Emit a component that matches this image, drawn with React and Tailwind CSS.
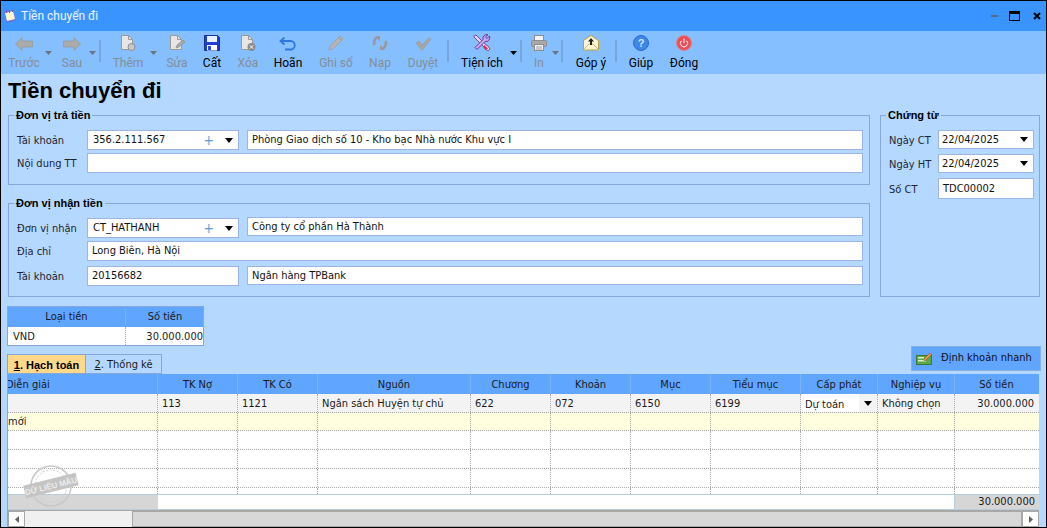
const font = "font-['DejaVu_Sans_Condensed','DejaVu_Sans',sans-serif]";
const uiFont = "font-['Roboto','Liberation_Sans',sans-serif]";
const boldFont = "font-['Liberation_Sans',sans-serif]";

const Icons = {
  back: (
    <svg width="18" height="14" viewBox="0 0 18 14"><path d="M.5 7 7 .5v3.500h10.500v6H7v3.500z" fill="#ababab" stroke="#979797" strokeWidth=".7" /></svg>
  ),
  next: (
    <svg width="18" height="14" viewBox="0 0 18 14"><path d="M17.500 7 11 .5v3.500H.5v6H11v3.500z" fill="#ababab" stroke="#979797" strokeWidth=".7" /></svg>
  ),
  add: (
    <svg width="16" height="16" viewBox="0 0 16 16"><path d="M1.500.5h7l4 4v10h-11z" fill="#e6e6e6" stroke="#9a9a9a" /><path d="M8.500.5v4h4" fill="none" stroke="#9a9a9a" /><circle cx="11.500" cy="12" r="3.500" fill="#c8c8c8" stroke="#8e8e8e" /></svg>
  ),
  edit: (
    <svg width="16" height="16" viewBox="0 0 16 16"><path d="M1.500.5h7l4 4v10h-11z" fill="#e6e6e6" stroke="#9a9a9a" /><path d="M8.500.5v4h4" fill="none" stroke="#9a9a9a" /><path d="m7 13 1-3 6-5 2 2-6 5z" fill="#aaa" stroke="#8e8e8e" strokeWidth=".7" /></svg>
  ),
  save: (
    <svg width="16" height="16" viewBox="0 0 16 16"><path d="M.5.5h13l2 2v13H.5z" fill="#1f3fd0" stroke="#16309f" /><rect x="3" y="1" width="10" height="6" fill="#e9f0ff" /><rect x="3" y="10" width="10" height="5.500" fill="#fff" /><rect x="4" y="11" width="3" height="4" fill="#2b4ad6" /></svg>
  ),
  del: (
    <svg width="16" height="16" viewBox="0 0 16 16"><path d="M1.500.5h7l4 4v10h-11z" fill="#e6e6e6" stroke="#9a9a9a" /><path d="M8.500.5v4h4" fill="none" stroke="#9a9a9a" /><circle cx="11.500" cy="12" r="4" fill="#8a8a8a" /><path d="m9.800 10.300 3.400 3.400m0-3.400-3.400 3.400" stroke="#fff" strokeWidth="1" /></svg>
  ),
  undo: (
    <svg width="18" height="14" viewBox="0 0 18 14"><path d="M2 4h9.500a4 4 0 0 1 0 8.500H6" fill="none" stroke="#2b78e0" strokeWidth="1.800" /><path d="M5.500.5 1.500 4l4 3.500" fill="none" stroke="#2b78e0" strokeWidth="1.800" /></svg>
  ),
  pen: (
    <svg width="16" height="16" viewBox="0 0 16 16"><path d="M1 15l1-4L12 1l3 3L5 14z" fill="#b5b5b5" stroke="#9a9a9a" strokeWidth=".7" /><path d="m10.500 2.500 3 3" stroke="#8e8e8e" /></svg>
  ),
  reload: (
    <svg width="16" height="16" viewBox="0 0 16 16"><path d="M2.500 10A6 6 0 0 1 5 2.600M13.500 6A6 6 0 0 1 11 13.400" fill="none" stroke="#999" strokeWidth="2.800" /><path d="M3 1h5v5zM13 15H8v-5z" fill="#999" /></svg>
  ),
  check: (
    <svg width="17" height="14" viewBox="0 0 17 14"><path d="M1 6l3-2 3 4 7-7.500 2 2-9 11z" fill="#a4a4a4" stroke="#989898" strokeWidth=".5" /></svg>
  ),
  tools: (
    <svg width="18" height="17" viewBox="0 0 18 17"><path d="M1 2l2-1 9 9 3 2 2 3-2 2-3-2-2-3-9-9z" fill="#e7d9f3" stroke="#6c3ea8" strokeWidth=".9" /><path d="M16.500 2 14 4.500 12.500 3 15 .7A4 4 0 0 0 10 5.500L2 13.500 4 15.500l8-8A4 4 0 0 0 16.500 2z" fill="#c8a8ea" stroke="#5d2f9e" strokeWidth=".9" /><path d="m11.500 11 3.500 3.500-1.500 1.500L10 12.500z" fill="#d9304a" /></svg>
  ),
  print: (
    <svg width="16" height="16" viewBox="0 0 16 16"><rect x="3.500" y=".5" width="9" height="5" fill="#f2f2f2" stroke="#8e8e8e" /><rect x=".5" y="5.500" width="15" height="6" rx="1" fill="#a8a8a8" stroke="#8e8e8e" /><rect x="3.500" y="9.500" width="9" height="6" fill="#f2f2f2" stroke="#8e8e8e" /><path d="M5 12h6M5 14h6" stroke="#a0a0a0" /></svg>
  ),
  mail: (
    <svg width="16" height="16" viewBox="0 0 16 16"><path d="M.5 5.500 8 .5l7.500 5v9.500H.5z" fill="#fff6d8" stroke="#c69a3a" /><path d="M.5 14.500 6 9h4l5.500 5.500" fill="none" stroke="#d9b968" /><path d="M8 3 5 6.500h2V10h2V6.500h2z" fill="#222" /></svg>
  ),
  help: (
    <svg width="16" height="16" viewBox="0 0 16 16"><circle cx="8" cy="8" r="7.500" fill="#3d86ea" stroke="#2a6cc8" /><text x="8" y="12" textAnchor="middle" fontSize="11" fontWeight="700" fill="#cfe4ff" fontFamily="Liberation Sans">?</text></svg>
  ),
  power: (
    <svg width="16" height="16" viewBox="0 0 16 16"><circle cx="8" cy="8" r="7.500" fill="#ec4d57" stroke="#d7868c" /><path d="M5.400 5.800a3.600 3.600 0 1 0 5.200 0" fill="none" stroke="#fff" strokeWidth="1" /><path d="M8 3.500v4.500" stroke="#fff" strokeWidth="1" /></svg>
  ),
};

function Caret({ cls, dis }) {
  return (
    <div className={`mt-[17px] flex h-[9px] items-center justify-center self-start ${cls}`}>
      <svg width="7" height="4" viewBox="0 0 7 4"><path d="M0 0h7L3.500 4z" fill={dis ? "#6b7280" : "#000"} /></svg>
    </div>
  );
}

function Sep({ cls }) {
  return <div className={`mt-[9px] h-[22px] w-[2px] bg-[#78a6dc] ${cls}`} />;
}

function Tool({ cls, icon, label, dis }) {
  return (
    <div className={`flex h-[43px] flex-col items-center ${cls}`}>
      <div className="flex h-[22px] items-end justify-center pb-[2px]">{Icons[icon]}</div>
      <div className={`mt-[2px] whitespace-nowrap text-[12px] leading-[16px] ${uiFont} ${dis ? "text-[#858d96]" : "text-black"}`}>{label}</div>
    </div>
  );
}

function Field({ cls, value, combo, date, h = "h-[20px]" }) {
  return (
    <div className={`flex items-center border border-[#9db4e8] bg-white text-[11px] leading-[16px] text-[#111] ${h} ${cls}`}>
      <span className={combo ? "pl-[5px]" : date ? "pl-[3px]" : "pl-[4px]"}>{value}</span>
      {combo && <span className="ml-auto mr-[11px] text-[14px] leading-none text-[#5d9be0]">+</span>}
      {(combo || date) && (
        <svg className={combo ? "mr-[5px]" : "ml-auto mr-[5px]"} width="8" height="5" viewBox="0 0 8 5"><path d="M0 0h8L4 5z" fill="#000" /></svg>
      )}
    </div>
  );
}

function Label({ children, cls }) {
  return <div className={`mt-[2px] text-[11px] leading-[16px] text-[#1c2430] ${cls}`}>{children}</div>;
}

function Group({ cls, title, children }) {
  return (
    <fieldset className={`border border-[#86a6dc] ${cls}`}>
      <legend className={`ml-[5px] px-[2px] text-[11px] font-bold leading-[14px] text-black ${boldFont}`}>{title}</legend>
      {children}
    </fieldset>
  );
}

const gridCols = "grid grid-cols-[150px_80px_80px_153px_80px_80px_80px_90px_77px_77px_83px]";
const headers = ["Diễn giải", "TK Nợ", "TK Có", "Nguồn", "Chương", "Khoản", "Mục", "Tiểu mục", "Cấp phát", "Nghiệp vụ", "Số tiền"];

function Row({ bg, h, leading = "leading-[18px]", values }) {
  return (
    <div className={`${gridCols} ${bg} ${h} border-b border-dotted border-[#a8a8a8]`}>
      {Array.from({ length: 11 }).map((_, i) => (
        <div key={i} className={`overflow-hidden whitespace-nowrap px-[4px] text-[11px] text-[#1a1a1a] ${leading} ${i < 10 ? "border-r border-dotted border-[#a8a8a8]" : ""}`}>
          {values ? values[i] : ""}
        </div>
      ))}
    </div>
  );
}

export default function App() {
  return (
    <div className={`flex h-[528px] w-[1047px] flex-col overflow-hidden border border-black bg-[#b4d8ff] ${font}`}>
      {/* title bar */}
      <div className="flex h-[30px] shrink-0 items-center bg-[#3a94ff]">
        <svg className="ml-[2px]" width="14" height="15" viewBox="0 0 14 15">
          <path d="M1 3 10 1l3 10-9 3z" fill="#7d6bd0" />
          <path d="M2 4l8-2 2 8-8 2z" fill="#fff8d0" />
          <path d="M3 1h1v3H3zM6 1h1v3H6zM9 1h1v2H9z" fill="#6b5cc0" />
        </svg>
        <span className={`ml-[4px] text-[12px] text-[#eaf4ff] ${uiFont}`}>Tiền chuyển đi</span>
        <div className="ml-auto flex items-center">
          <div className="h-[2px] w-[7px] bg-[#5b6b80]" />
          <div className="ml-[11px] h-[10px] w-[11px] border border-t-[3px] border-black" />
          <svg className="ml-[13px] mr-[5px]" width="8" height="8" viewBox="0 0 8 8"><path d="M1 1l6 6M7 1 1 7" stroke="#000" strokeWidth="2" /></svg>
        </div>
      </div>

      {/* toolbar */}
      <div className="flex h-[43px] shrink-0 bg-[#85bfff] pl-[3px]">
        <Tool cls="w-[40px]" icon="back" label="Trước" dis />
        <Caret cls="w-[8px]" dis />
        <Tool cls="ml-[4px] w-[32px]" icon="next" label="Sau" dis />
        <Caret cls="w-[8px]" dis />
        <Sep cls="ml-[3px]" />
        <Tool cls="ml-[7px] w-[40px]" icon="add" label="Thêm" dis />
        <Caret cls="ml-[1px] w-[8px]" dis />
        <Tool cls="ml-[4px] w-[32px]" icon="edit" label="Sửa" dis />
        <Tool cls="ml-[3px] w-[32px]" icon="save" label="Cất" />
        <Tool cls="ml-[4px] w-[32px]" icon="del" label="Xóa" dis />
        <Tool cls="ml-[6px] w-[36px]" icon="undo" label="Hoãn" />
        <Tool cls="ml-[8px] w-[44px]" icon="pen" label="Ghi sổ" dis />
        <Tool cls="ml-[6px] w-[32px]" icon="reload" label="Nạp" dis />
        <Tool cls="ml-[7px] w-[40px]" icon="check" label="Duyệt" dis />
        <Sep cls="ml-[4px]" />
        <Tool cls="ml-[8px] w-[50px]" icon="tools" label="Tiện ích" />
        <Caret cls="ml-[2px] w-[8px]" />
        <Sep cls="ml-[3px]" />
        <Tool cls="ml-[5px] w-[24px]" icon="print" label="In" dis />
        <Caret cls="w-[8px]" dis />
        <Sep cls="ml-[2px]" />
        <Tool cls="ml-[8px] w-[40px]" icon="mail" label="Góp ý" />
        <Sep cls="ml-[4px]" />
        <Tool cls="ml-[6px] w-[36px]" icon="help" label="Giúp" />
        <Tool cls="ml-[5px] w-[40px]" icon="power" label="Đóng" />
      </div>

      {/* body */}
      <div className="relative flex min-h-0 flex-1 flex-col pl-[7px]">
        <h1 className={`h-[34px] pt-[3px] text-[22px] font-bold leading-[28px] text-black ${boldFont}`}>Tiền chuyển đi</h1>

        <div className="flex">
          <div className="flex w-[862px] flex-col gap-[11px]">
            <Group cls="h-[77px]" title="Đơn vị trả tiền">
              <div className="flex flex-col gap-[3px] pt-[8px]">
                <div className="flex items-center">
                  <Label cls="w-[78px] pl-[8px]">Tài khoản</Label>
                  <Field cls="w-[152px]" value="356.2.111.567" combo />
                  <Field cls="ml-[8px] w-[616px]" value="Phòng Giao dịch số 10 - Kho bạc Nhà nước Khu vực I" />
                </div>
                <div className="flex items-center">
                  <Label cls="w-[78px] pl-[8px]">Nội dung TT</Label>
                  <Field cls="w-[776px]" value="" />
                </div>
              </div>
            </Group>
            <Group cls="h-[101px]" title="Đơn vị nhận tiền">
              <div className="flex flex-col pt-[8px]">
                <div className="flex items-center">
                  <Label cls="w-[78px] pl-[8px]">Đơn vị nhận</Label>
                  <Field cls="w-[152px]" value="CT_HATHANH" combo />
                  <Field cls="-mt-[1px] ml-[8px] w-[616px] self-start" h="h-[19px]" value="Công ty cổ phần Hà Thành" />
                </div>
                <div className="mt-[3px] flex items-center">
                  <Label cls="w-[78px] pl-[8px]">Địa chỉ</Label>
                  <Field cls="w-[776px]" value="Long Biên, Hà Nội" />
                </div>
                <div className="mt-[5px] flex items-center">
                  <Label cls="w-[78px] pl-[8px]">Tài khoản</Label>
                  <Field cls="w-[152px]" value="20156682" />
                  <Field cls="ml-[8px] w-[616px] self-start" h="h-[19px]" value="Ngân hàng TPBank" />
                </div>
              </div>
            </Group>
          </div>

          <Group cls="ml-[10px] h-[189px] w-[160px]" title="Chứng từ">
            <div className="flex flex-col gap-[5px] pt-[8px]">
              <div className="flex items-center">
                <Label cls="w-[57px] pl-[8px]">Ngày CT</Label>
                <Field cls="w-[96px]" h="h-[19px]" value="22/04/2025" date />
              </div>
              <div className="flex items-center">
                <Label cls="w-[57px] pl-[8px]">Ngày HT</Label>
                <Field cls="w-[96px]" h="h-[19px]" value="22/04/2025" date />
              </div>
              <div className="flex items-center">
                <Label cls="w-[57px] pl-[8px]">Số CT</Label>
                <Field cls="w-[96px]" h="h-[21px]" value="TDC00002" />
              </div>
            </div>
          </Group>
        </div>

        {/* currency table */}
        <div className="-ml-[1px] mt-[9px] w-[197px] border border-[#86a6dc] bg-white text-[11px] leading-[16px] text-[#1a1a1a]">
          <div className="grid h-[20px] grid-cols-[118px_78px] items-center bg-[#60a5ff] text-center">
            <div className="border-r border-[#7cb0f0]">Loại tiền</div>
            <div>Số tiền</div>
          </div>
          <div className="grid h-[18px] grid-cols-[118px_78px]">
            <div className="flex h-full items-center border-r border-dotted border-[#a8a8a8] pl-[5px] pt-[1px]">VND</div>
            <div className="flex items-center justify-end pr-[1px] pt-[1px]">30.000.000</div>
          </div>
        </div>

        {/* tabs + quick button */}
        <div className="flex h-[28px] items-start justify-between pr-[5px]">
          <div className="-ml-[1px] mt-[8px] flex h-[20px] text-[11px] leading-[20px]">
            <div className={`w-[79px] border border-[#86a6dc] bg-[#ffd88a] text-center font-bold text-black ${boldFont}`}>
              <span className="underline">1</span>. Hạch toán
            </div>
            <div className="w-[76px] border border-l-0 border-[#86a6dc] bg-[#b4d8ff] text-center text-[#1a1a1a]">
              <span className="underline">2</span>. Thống kê
            </div>
          </div>
          <div className="flex h-[25px] w-[130px] items-center border border-[#86b0e0] bg-[#60a5ff] pl-[4px] text-[11px] text-[#111]">
            <svg width="16" height="13" viewBox="0 0 16 13">
              <rect x=".5" y="3.500" width="15" height="9" fill="#5aa84a" stroke="#3b7a33" />
              <rect x="2" y="5" width="6" height="1.500" fill="#d7f0c8" />
              <rect x="2" y="8" width="8" height="1.500" fill="#d7f0c8" />
              <path d="M8 7 14 1l1.500 1.500-6 6H8z" fill="#e8a04a" stroke="#b0402a" strokeWidth=".6" />
            </svg>
            <span className="ml-[9px]">Định khoản nhanh</span>
          </div>
        </div>

        {/* grid */}
        <div className="relative -ml-[1px] flex w-[1032px] flex-1 flex-col overflow-hidden border-l border-[#86a6dc]">
          <div className={`${gridCols} h-[20px] shrink-0 bg-[#60a5ff] text-[11px] leading-[21px] text-[#1a1a1a]`}>
            {headers.map((h, i) => (
              <div key={i} className={`overflow-hidden whitespace-nowrap text-center ${i < 10 ? "border-r border-[#7cb0f0]" : ""} ${i === 0 ? "-indent-[2px] text-left" : ""}`}>
                {h}
              </div>
            ))}
          </div>
          <Row
            bg="bg-[#f3f3f3]"
            h="h-[19px]"
            leading="leading-[19px]"
            values={[
              "",
              "113",
              "1121",
              "Ngân sách Huyện tự chủ",
              "622",
              "072",
              "6150",
              "6199",
              <div key="c" className="-mx-[4px] flex h-full items-center bg-white pl-[4px] pt-[2px]">
                <span>Dự toán</span>
                <span className="-mt-[2px] ml-auto flex h-[18px] w-[18px] items-center justify-center bg-[#f3f3f3]">
                  <svg width="8" height="5" viewBox="0 0 8 5"><path d="M0 0h8L4 5z" fill="#000" /></svg>
                </span>
              </div>,
              "Không chọn",
              <div key="t" className="text-right">30.000.000</div>,
            ]}
          />
          <Row bg="bg-[#ffffe0]" h="h-[18px]" values={[<span key="m" className="-ml-[4px]">mới</span>]} />
          <Row bg="bg-white" h="h-[19px]" />
          <Row bg="bg-white" h="h-[19px]" />
          <Row bg="bg-white" h="h-[19px]" />
          <div className={`${gridCols} h-[6px] bg-white`}>
            {Array.from({ length: 11 }).map((_, i) => (
              <div key={i} className={i < 10 ? "border-r border-dotted border-[#a8a8a8]" : ""} />
            ))}
          </div>
          <div className="flex h-[16px] shrink-0 border-y border-[#b8ccdc] bg-white text-[11px] leading-[14px] text-[#1a1a1a]">
            <div className="w-[150px] bg-[#d6d6d6]" />
            <div className="w-[797px] border-r border-[#b8ccdc]" />
            <div className="flex-1 bg-[#d6d6d6] pr-[4px] text-right">30.000.000</div>
          </div>
          <div className="flex h-[17px] shrink-0 border-t border-[#a8a8a8] bg-[#f0f0f0]">
            <div className="flex w-[17px] items-center justify-center border border-[#a8a8a8] bg-white">
              <svg width="4" height="7" viewBox="0 0 4 7"><path d="M4 0v7L0 3.500z" fill="#606060" /></svg>
            </div>
            <div className="w-[107px]" />
            <div className="flex-1 border border-[#a8a8a8] bg-[#d8d8d8]" />
            <div className="flex w-[17px] items-center justify-center border border-[#a8a8a8] bg-white">
              <svg width="4" height="7" viewBox="0 0 4 7"><path d="M0 0v7l4-3.500z" fill="#606060" /></svg>
            </div>
          </div>
          {/* watermark stamp */}
          <svg className="pointer-events-none absolute left-[15px] top-[88px]" width="58" height="48" viewBox="0 0 58 48">
            <circle cx="28" cy="24" r="20" fill="none" stroke="#c8c8c8" strokeWidth="1.500" />
            <circle cx="28" cy="24" r="16" fill="none" stroke="#d0d0d0" strokeWidth="1" strokeDasharray="2 1.500" />
            <g transform="rotate(-14 28 24)">
              <rect x="1" y="17" width="54" height="13" fill="#c4c4c4" />
              <text x="28" y="27" textAnchor="middle" fontSize="8" fontWeight="700" fill="#ececec" fontFamily="Liberation Sans">DỮ LIỆU MẪU</text>
            </g>
          </svg>
        </div>
      </div>
    </div>
  );
}
